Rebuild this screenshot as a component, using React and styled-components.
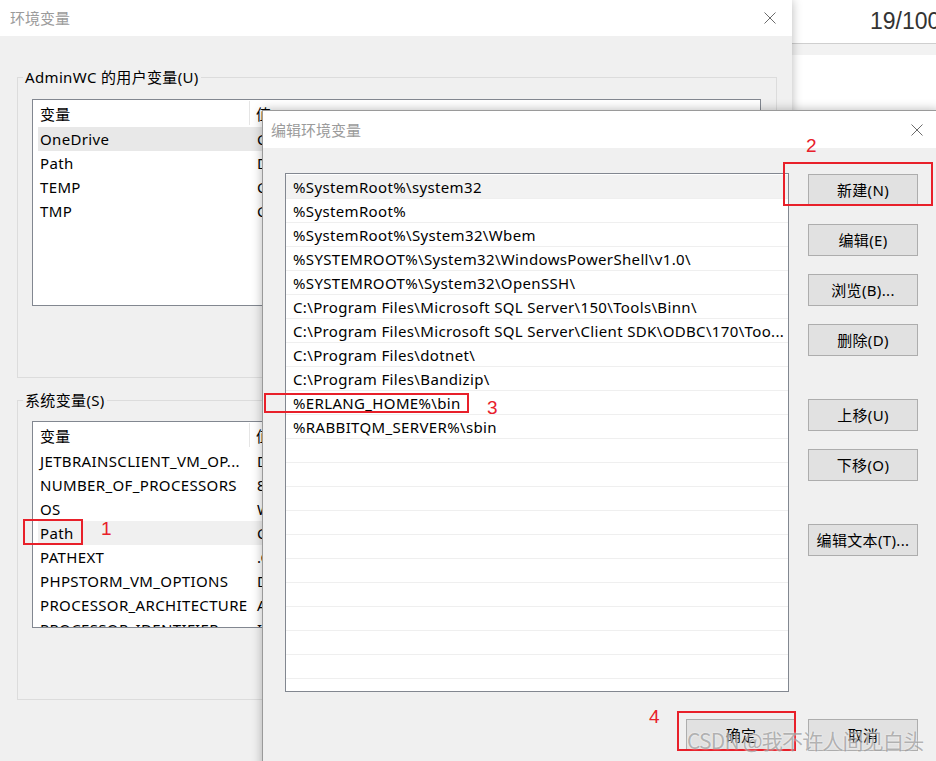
import React from "react";
import styled, { createGlobalStyle } from "styled-components";

const GlobalStyle = createGlobalStyle`
  html, body { margin: 0; padding: 0; overflow: hidden; background: #ffffff; }
  * { box-sizing: border-box; }
`;

const UI_FONT = `"Noto Sans", "Noto Sans CJK SC", sans-serif`;

const Desktop = styled.div`
  position: relative;
  width: 936px;
  height: 761px;
  overflow: hidden;
  background: #ffffff;
  font-family: ${UI_FONT};
  font-size: 15px;
  letter-spacing: 0.35px;
  color: #000;
`;

const Window = styled.div`
  position: absolute;
  left: ${(p) => p.$left}px;
  top: ${(p) => p.$top}px;
  width: ${(p) => p.$width}px;
  height: ${(p) => p.$height}px;
  display: flex;
  flex-direction: column;
  background: #f0f0f0;
  border: ${(p) => (p.$bordered ? "1px solid #9a9a9a" : "none")};
  box-shadow: 0 0 10px rgba(0, 0, 0, 0.28);
`;

const TitleBar = styled.div`
  height: ${(p) => p.$height}px;
  flex: none;
  display: flex;
  align-items: center;
  justify-content: space-between;
  padding-left: ${(p) => p.$padLeft}px;
  background: #ffffff;
`;

const TitleText = styled.span`
  color: #9b9b9b;
  font-size: 15px;
  line-height: 20px;
  letter-spacing: 0;
`;

const CloseButton = styled.div`
  width: 44px;
  height: 100%;
  display: flex;
  align-items: center;
  justify-content: center;
`;

const CloseIcon = () => (
  <svg width="12" height="12" viewBox="0 0 12 12">
    <path d="M0.5 0.5 L11.5 11.5 M11.5 0.5 L0.5 11.5" stroke="#6b6b6b" strokeWidth="1" fill="none" />
  </svg>
);

const MainBody = styled.div`
  flex: 1;
  display: flex;
  flex-direction: column;
  padding: 31px 0 0 17px;
`;

const GroupBox = styled.fieldset`
  margin: 0 0 ${(p) => p.$gapAfter}px 0;
  padding: 0 15px 0 5px;
  width: 760px;
  border: 1px solid #dcdcdc;
  min-width: 0;
`;

const GroupLegend = styled.legend`
  padding: 0 2px;
  line-height: 20px;
  font-size: 15px;
  color: #000;
`;

const ListView = styled.div`
  margin: ${(p) => p.$top}px 0 71px 9px;
  height: 207px;
  background: #ffffff;
  border: 1px solid #828790;
  overflow: hidden;
`;

const ListHeader = styled.div`
  display: grid;
  grid-template-columns: 217px 1fr;
  height: 27px;
`;

const HeaderCell = styled.div`
  display: flex;
  align-items: center;
  padding-left: ${(p) => (p.$first ? 7 : 6)}px;
  border-right: ${(p) => (p.$first ? "1px solid #e5e5e5" : "none")};
  margin: 1px 0 2px;
  white-space: nowrap;
  overflow: hidden;
`;

const ListRow = styled.div`
  display: grid;
  grid-template-columns: 212px 1fr;
  height: 24px;
  margin-left: 5px;
  background: ${(p) => p.$bg || "transparent"};
`;

const Cell = styled.div`
  display: flex;
  align-items: center;
  padding-left: ${(p) => (p.$first ? 2 : 7)}px;
  white-space: nowrap;
  overflow: hidden;
`;

const DialogBody = styled.div`
  flex: 1;
  display: flex;
  flex-direction: column;
  padding: 25px 21px 0 22px;
`;

const DialogMain = styled.div`
  display: flex;
  gap: 19px;
`;

const PathList = styled.div`
  width: 504px;
  height: 519px;
  background: #ffffff;
  border: 1px solid #828790;
  padding-top: 1px;
  overflow: hidden;
`;

const PathRow = styled.div`
  height: 24px;
  display: flex;
  align-items: center;
  padding-left: 7px;
  border-bottom: 1px solid #efefef;
  background: ${(p) => (p.$selected ? "#f2f2f2" : "#ffffff")};
  white-space: nowrap;
  overflow: hidden;
`;

const ButtonColumn = styled.div`
  display: flex;
  flex-direction: column;
  gap: 18px;
  padding-top: 1px;
`;

const Button = styled.div`
  width: 110px;
  height: 32px;
  flex: none;
  margin-top: ${(p) => p.$extra || 0}px;
  display: flex;
  align-items: center;
  justify-content: center;
  background: #e1e1e1;
  border: 1px solid #adadad;
  font-size: 15px;
  line-height: 20px;
  white-space: nowrap;
`;

const FooterRow = styled.div`
  display: flex;
  justify-content: flex-end;
  gap: 12px;
  margin-top: 27px;
`;

const SideWindow = styled.div`
  position: absolute;
  left: 760px;
  top: 0;
  width: 400px;
  height: 761px;
  background: #ffffff;
  display: flex;
  flex-direction: column;
`;

const SideHeader = styled.div`
  height: 44px;
  display: flex;
  align-items: center;
  padding-left: 110px;
  border-bottom: 1px solid #cfcfcf;
  font-family: "Liberation Sans", Arial, sans-serif;
  font-size: 23px;
  letter-spacing: 0;
  color: #333333;
`;

const SideBand = styled.div`
  height: 11px;
  background: #f2f2f2;
`;

const RedBox = styled.div`
  position: absolute;
  left: ${(p) => p.$x}px;
  top: ${(p) => p.$y}px;
  width: ${(p) => p.$w}px;
  height: ${(p) => p.$h}px;
  border: 2px solid #e8202a;
  pointer-events: none;
`;

const RedNumber = styled.div`
  position: absolute;
  left: ${(p) => p.$x}px;
  top: ${(p) => p.$y}px;
  font-family: "Liberation Sans", Arial, sans-serif;
  font-size: 19px;
  line-height: 20px;
  letter-spacing: 0;
  color: #e8202a;
`;

const Watermark = styled.div`
  position: absolute;
  left: 687px;
  top: 726px;
  font-family: "Noto Sans CJK SC", sans-serif;
  font-size: 21px;
  line-height: 28px;
  letter-spacing: -0.8px;
  color: rgba(120, 120, 120, 0.55);
  text-shadow: 0 0 2px rgba(255, 255, 255, 0.9);
  white-space: nowrap;
  pointer-events: none;
`;

const userVars = [
  ["OneDrive", "C:\\Users\\AdminWC\\OneDrive", "#e8e8e8"],
  ["Path", "D:\\Program Files\\nodejs\\node_global"],
  ["TEMP", "C:\\Users\\AdminWC\\AppData\\Local\\Temp"],
  ["TMP", "C:\\Users\\AdminWC\\AppData\\Local\\Temp"],
];

const systemVars = [
  ["JETBRAINSCLIENT_VM_OP...", "D:\\JetBrains\\jetbrainsclient.vmoptions"],
  ["NUMBER_OF_PROCESSORS", "8"],
  ["OS", "Windows_NT"],
  ["Path", "C:\\Windows\\system32;C:\\Windows", "#f0f0f0"],
  ["PATHEXT", ".COM;.EXE;.BAT;.CMD;.VBS"],
  ["PHPSTORM_VM_OPTIONS", "D:\\JetBrains\\phpstorm.vmoptions"],
  ["PROCESSOR_ARCHITECTURE", "AMD64"],
  ["PROCESSOR_IDENTIFIER", "Intel64 Family 6 Model 142"],
];

const paths = [
  "%SystemRoot%\\system32",
  "%SystemRoot%",
  "%SystemRoot%\\System32\\Wbem",
  "%SYSTEMROOT%\\System32\\WindowsPowerShell\\v1.0\\",
  "%SYSTEMROOT%\\System32\\OpenSSH\\",
  "C:\\Program Files\\Microsoft SQL Server\\150\\Tools\\Binn\\",
  "C:\\Program Files\\Microsoft SQL Server\\Client SDK\\ODBC\\170\\Too...",
  "C:\\Program Files\\dotnet\\",
  "C:\\Program Files\\Bandizip\\",
  "%ERLANG_HOME%\\bin",
  "%RABBITQM_SERVER%\\sbin",
];

const sideButtons = [
  ["新建(N)", 0],
  ["编辑(E)", 0],
  ["浏览(B)...", 0],
  ["删除(D)", 0],
  ["上移(U)", 25],
  ["下移(O)", 0],
  ["编辑文本(T)...", 25],
];

function VarList({ top, rows }) {
  return (
    <ListView $top={top}>
      <ListHeader>
        <HeaderCell $first>变量</HeaderCell>
        <HeaderCell>值</HeaderCell>
      </ListHeader>
      {rows.map(([name, value, bg]) => (
        <ListRow key={name} $bg={bg}>
          <Cell $first>{name}</Cell>
          <Cell>{value}</Cell>
        </ListRow>
      ))}
    </ListView>
  );
}

export default function App() {
  const emptyRows = Array.from({ length: 11 }, (_, i) => i);
  return (
    <>
      <GlobalStyle />
      <Desktop>
        <SideWindow>
          <SideHeader>19/100</SideHeader>
          <SideBand />
        </SideWindow>

        <Window $left={0} $top={0} $width={792} $height={761}>
          <TitleBar $height={36} $padLeft={10}>
            <TitleText>环境变量</TitleText>
            <CloseButton>
              <CloseIcon />
            </CloseButton>
          </TitleBar>
          <MainBody>
            <GroupBox $gapAfter={12}>
              <GroupLegend>AdminWC 的用户变量(U)</GroupLegend>
              <VarList top={12} rows={userVars} />
            </GroupBox>
            <GroupBox $gapAfter={0}>
              <GroupLegend>系统变量(S)</GroupLegend>
              <VarList top={11} rows={systemVars} />
            </GroupBox>
          </MainBody>
        </Window>

        <Window $left={262} $top={110} $width={678} $height={700} $bordered>
          <TitleBar $height={37} $padLeft={8}>
            <TitleText>编辑环境变量</TitleText>
            <CloseButton>
              <CloseIcon />
            </CloseButton>
          </TitleBar>
          <DialogBody>
            <DialogMain>
              <PathList>
                {paths.map((p, i) => (
                  <PathRow key={p} $selected={i === 0}>
                    {p}
                  </PathRow>
                ))}
                {emptyRows.map((i) => (
                  <PathRow key={"empty" + i} />
                ))}
              </PathList>
              <ButtonColumn>
                {sideButtons.map(([label, extra]) => (
                  <Button key={label} $extra={extra}>
                    {label}
                  </Button>
                ))}
              </ButtonColumn>
            </DialogMain>
            <FooterRow>
              <Button>确定</Button>
              <Button>取消</Button>
            </FooterRow>
          </DialogBody>
        </Window>

        <RedBox $x={23} $y={519} $w={60} $h={26} />
        <RedNumber $x={101} $y={519}>1</RedNumber>
        <RedBox $x={783} $y={162} $w={150} $h={44} />
        <RedNumber $x={806} $y={136}>2</RedNumber>
        <RedBox $x={264} $y={393} $w={205} $h={20} />
        <RedNumber $x={487} $y={398}>3</RedNumber>
        <RedBox $x={677} $y={711} $w={119} $h={40} />
        <RedNumber $x={649} $y={707}>4</RedNumber>

        <Watermark>CSDN @我不许人间见白头</Watermark>
      </Desktop>
    </>
  );
}
